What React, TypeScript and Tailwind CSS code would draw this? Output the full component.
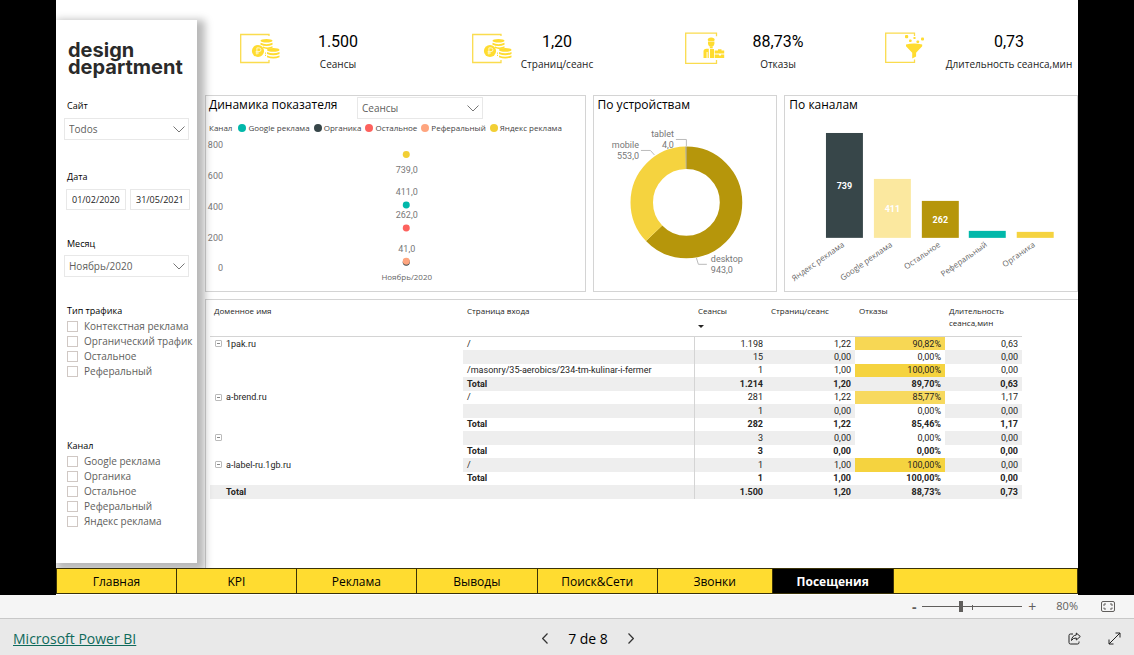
import { useState } from 'react';
import type { ReactNode } from 'react';

type Option = { label: string; width: string };

const trafficTypes = ['Контекстная реклама', 'Органический трафик', 'Остальное', 'Реферальный'];
const channels = ['Google реклама', 'Органика', 'Остальное', 'Реферальный', 'Яндекс реклама'];

const legend = [
  { label: 'Google реклама', dot: 'bg-[#01b8aa]' },
  { label: 'Органика', dot: 'bg-[#374649]' },
  { label: 'Остальное', dot: 'bg-[#fd625e]' },
  { label: 'Реферальный', dot: 'bg-[#fea57f]' },
  { label: 'Яндекс реклама', dot: 'bg-[#f2cf35]' },
];

const tabs: Option[] = [
  { label: 'Главная', width: 'flex-[120]' },
  { label: 'KPI', width: 'flex-[120]' },
  { label: 'Реклама', width: 'flex-[120]' },
  { label: 'Выводы', width: 'flex-[121]' },
  { label: 'Поиск&Сети', width: 'flex-[120]' },
  { label: 'Звонки', width: 'flex-[115]' },
  { label: 'Посещения', width: 'flex-[121]' },
  { label: '', width: 'flex-[185]' },
];

type Row = {
  domain?: string;
  toggle?: boolean;
  page: string;
  values: [string, string, string, string];
  heat?: string;
  total?: boolean;
};

const rows: Row[] = [
  { domain: '1pak.ru', toggle: true, page: '/', values: ['1.198', '1,22', '90,82%', '0,63'], heat: 'bg-[#f7d754]' },
  { page: '', values: ['15', '0,00', '0,00%', '0,00'], heat: 'bg-white' },
  { page: '/masonry/35-aerobics/234-tm-kulinar-i-fermer', values: ['1', '1,00', '100,00%', '0,00'], heat: 'bg-[#f5d33f]' },
  { page: 'Total', values: ['1.214', '1,20', '89,70%', '0,63'], total: true },
  { domain: 'a-brend.ru', toggle: true, page: '/', values: ['281', '1,22', '85,77%', '1,17'], heat: 'bg-[#f7d95f]' },
  { page: '', values: ['1', '0,00', '0,00%', '0,00'], heat: 'bg-white' },
  { page: 'Total', values: ['282', '1,22', '85,46%', '1,17'], total: true },
  { domain: '', toggle: true, page: '', values: ['3', '0,00', '0,00%', '0,00'], heat: 'bg-white' },
  { page: 'Total', values: ['3', '0,00', '0,00%', '0,00'], total: true },
  { domain: 'a-label-ru.1gb.ru', toggle: true, page: '/', values: ['1', '1,00', '100,00%', '0,00'], heat: 'bg-[#f5d33f]' },
  { page: 'Total', values: ['1', '1,00', '100,00%', '0,00'], total: true },
];

function CoinsIcon() {
  return (
    <svg viewBox="0 0 40 32" className="h-8 w-10 shrink-0" fill="none" aria-hidden="true">
      <path d="M29 4V2.500H.7V30.500H29V28" stroke="#fadc4e" strokeWidth="1.300" />
      <g fill="#ffdc30">
        <path d="M20.500 8.800a6 1.800 0 0 1 12 0a6 1.800 0 0 1-12 0ZM20.500 10.800q6 2.800 12 0v1.900q-6 2.800-12 0ZM23 14.500q5 1.900 9.500-.2v1.700q-2.500 1.300-6 1l-3.500-1Z" />
        <path d="M27 17.900a6 1.800 0 0 1 12.500 0a6 1.800 0 0 1-12.500 0ZM27 20q6 2.700 12.500 0v2q-6 2.700-12.500 0ZM27 23.400q6 2.600 12.500 0v1.900q-6 2.600-12.500 0Z" />
        <circle cx="18" cy="19" r="6.100" />
        <path d="M25 20.500h1v1.200h-1zM25 22.800h1V24h-1z" />
      </g>
      <path d="M16.900 22.500v-6.600h2.200a1.800 1.800 0 0 1 0 3.700h-3.400M15.700 21h3.200" stroke="#fff7cc" strokeWidth="1" />
    </svg>
  );
}

function WorkerIcon() {
  return (
    <svg viewBox="0 0 40 32" className="h-8 w-10 shrink-0" fill="none" aria-hidden="true">
      <path d="M31.500 4.300V1.200H.7V31.300H31.500V28" stroke="#fadc4e" strokeWidth="1.300" />
      <g fill="#ffdc30">
        <path d="M22.700 8q0-2.500 3.500-2.500T29.700 8l-.7 1h-5.600Z" />
        <path d="M23 9.500h6.400v2q-.4 3.200-3.200 3.200T23 11.500Z" />
        <path d="M24.800 14.500h2.900v1.800h-2.900z" />
        <path d="M18.500 26v-6.500q0-2.500 3-2.700h2.300V26h-1.200v-6h-1v6ZM25 17h4v9H25Z" />
        <path d="M29.700 18.500h3.300v-1.300h3.500v1.300h2.700v3H29.700ZM29.700 22.500h4.300v1h2v-1h3.200V26H29.700Z" />
      </g>
    </svg>
  );
}

function FunnelIcon() {
  return (
    <svg viewBox="0 0 40 32" className="h-8 w-10 shrink-0" fill="none" aria-hidden="true">
      <path d="M29.500 4V1.200H.7V30.300H29.500V27.500" stroke="#fadc4e" strokeWidth="1.300" />
      <g fill="#ffdc30">
        <path d="M21 12.500q8-2 16.200 0v1.700l-6.100 6.500v3.800l-3.900 2v-5.800l-6.200-6.500Z" />
        <rect x="20" y="3" width="3.200" height="3.200" rx="1" />
        <rect x="24" y="7.500" width="2.600" height="2.600" rx=".8" />
        <rect x="28.500" y="5" width="2" height="2" />
        <rect x="31.500" y="8.500" width="2.600" height="2.600" rx=".8" />
        <rect x="36" y="5.500" width="3" height="3" rx="1" />
      </g>
    </svg>
  );
}

function Kpi({ icon, value, label, box }: { icon: ReactNode; value: string; label: string; box: string }) {
  return (
    <div className="flex min-w-0 items-start">
      {icon}
      <div className={`flex flex-col items-center whitespace-nowrap ${box}`}>
        <span className="font-[Roboto] text-base leading-5 text-black">{value}</span>
        <span className="mt-1 text-[10px] leading-4 text-[#222]">{label}</span>
      </div>
    </div>
  );
}

function Dropdown({ id, label, value, size }: { id: string; label?: string; value: string; size: string }) {
  return (
    <div className={`relative ${size}`}>
      <select
        id={id}
        aria-label={label}
        className="block h-[22px] w-full appearance-none border border-[#e8e8e8] bg-white pl-1 text-[10px] text-[#605e5c]"
      >
        <option>{value}</option>
      </select>
      <svg viewBox="0 0 12 7" className="pointer-events-none absolute top-2 right-1 h-[7px] w-3" fill="none" stroke="#777" aria-hidden="true">
        <path d="M.5.500 6 6 11.500.500" />
      </svg>
    </div>
  );
}

function CheckList({ title, items }: { title: string; items: string[] }) {
  return (
    <fieldset>
      <legend className="text-[9px] leading-4 text-black">{title}</legend>
      {items.map((item) => (
        <label key={item} className="flex h-[15px] items-center gap-1.5 whitespace-nowrap text-[10px] leading-[15px] text-[#605e5c]">
          <input type="checkbox" className="size-[11px] shrink-0 appearance-none border border-[#d0c8c4] bg-white checked:bg-[#605e5c]" />
          {item}
        </label>
      ))}
    </fieldset>
  );
}

function Sidebar() {
  return (
    <aside className="relative mt-5 mb-[5px] flex flex-col bg-white pr-1 pb-[33px] pl-[11px] shadow-[4px_4px_8px_4px_rgba(0,0,0,0.28)]">
      <div className="mt-[22px] pl-px font-[Inter] text-[20px] leading-[17px] font-bold text-[#2a2a2a]">
        design
        <br />
        department
      </div>
      <label htmlFor="site" className="mt-[22px] text-[9px] leading-4 text-black">Сайт</label>
      <Dropdown id="site" value="Todos" size="mt-1 -ml-[3px] w-[125px]" />
      <fieldset className="mt-[29px]">
        <legend className="text-[9px] leading-4 text-black">Дата</legend>
        <div className="mt-1 -ml-px flex gap-1">
          <input aria-label="Начало" defaultValue="01/02/2020" className="h-[21px] w-[60px] border border-[#e8e8e8] pl-[5px] text-[9px] text-[#222]" />
          <input aria-label="Конец" defaultValue="31/05/2021" className="h-[21px] w-[60px] border border-[#e8e8e8] pl-[5px] text-[9px] text-[#222]" />
        </div>
      </fieldset>
      <label htmlFor="month" className="mt-[26px] text-[9px] leading-4 text-black">Месяц</label>
      <Dropdown id="month" value="Ноябрь/2020" size="mt-[3px] -ml-[3px] w-[125px]" />
      <div className="mt-[26px]">
        <CheckList title="Тип трафика" items={trafficTypes} />
      </div>
      <div className="mt-[59px]">
        <CheckList title="Канал" items={channels} />
      </div>
    </aside>
  );
}

function ScatterPanel() {
  const ticks = [
    { label: '800', y: 9 },
    { label: '600', y: 40 },
    { label: '400', y: 71 },
    { label: '200', y: 102 },
    { label: '0', y: 132 },
  ];
  const points = [
    { y: 18.5, text: '739,0', ty: 34, color: '#f2cf35' },
    { y: 69, text: '411,0', ty: 56, color: '#01b8aa' },
    { y: 92, text: '262,0', ty: 79, color: '#fd625e' },
    { y: 125.5, text: '41,0', ty: 113, color: '#fea57f' },
  ];
  return (
    <section className="min-w-0 border border-[#d4d4d4]">
      <div className="flex h-6 items-start pl-[3px]">
        <h2 className="w-[148px] text-[12px] leading-[18px] whitespace-nowrap text-black">Динамика показателя</h2>
        <Dropdown id="metric" label="Показатель" value="Сеансы" size="mt-px w-[126px]" />
      </div>
      <div className="flex h-4 items-center gap-1 pl-[3px] text-[8px] whitespace-nowrap text-[#444]">
        <span className="mr-0.5">Канал</span>
        {legend.map((item) => (
          <span key={item.label} className="flex items-center">
            <span className={`mr-0.5 size-2 rounded-full ${item.dot}`} />
            {item.label}
          </span>
        ))}
      </div>
      <svg viewBox="0 0 379 155" className="w-full" fontFamily="Roboto" fontSize="9" fill="#777" aria-label="Динамика показателя">
        {ticks.map((t) => (
          <text key={t.label} x="17" y={t.y + 3} textAnchor="end">{t.label}</text>
        ))}
        <circle cx="200.500" cy="126.500" r="3.500" fill="#374649" />
        {points.map((p) => (
          <g key={p.text}>
            <circle cx="200.500" cy={p.y} r="3.500" fill={p.color} />
            <text x="201" y={p.ty + 3} textAnchor="middle">{p.text}</text>
          </g>
        ))}
        <text x="201" y="144" textAnchor="middle" fontFamily="Open Sans" fontSize="8" fill="#666">Ноябрь/2020</text>
      </svg>
    </section>
  );
}

function DonutPanel() {
  return (
    <section className="min-w-0 border border-[#d4d4d4]">
      <h2 className="h-6 pl-1 text-[12px] leading-[18px] whitespace-nowrap text-black">По устройствам</h2>
      <svg viewBox="0 0 183 170" className="w-full" fontFamily="Roboto" fontSize="9" fill="#777" aria-label="По устройствам">
        <g fill="none" strokeWidth="22.500" transform="rotate(-90 92.500 82.500)">
          <circle cx="92.500" cy="82.500" r="44.700" stroke="#b6960b" pathLength="1500" strokeDasharray="943 557" />
          <circle cx="92.500" cy="82.500" r="44.700" stroke="#f5d33f" pathLength="1500" strokeDasharray="553 947" strokeDashoffset="-943" />
          <circle cx="92.500" cy="82.500" r="44.700" stroke="#8a8468" pathLength="1500" strokeDasharray="4 1496" strokeDashoffset="-1496" />
        </g>
        <g fill="none" stroke="#bbb">
          <path d="M82 19.500H92.500V26" />
          <path d="M47 30.500H56.500L60.500 35" />
          <path d="M102.500 138L104.500 144.500H113" />
        </g>
        <g textAnchor="end">
          <text x="80" y="17">tablet</text>
          <text x="80" y="28">4,0</text>
          <text x="45" y="28">mobile</text>
          <text x="45" y="39">553,0</text>
        </g>
        <text x="117" y="142">desktop</text>
        <text x="117" y="153">943,0</text>
      </svg>
    </section>
  );
}

function BarsPanel() {
  const bars = [
    { label: 'Яндекс реклама', x: 41, h: 105, color: '#374649', value: '739' },
    { label: 'Google реклама', x: 89, h: 59, color: '#fbe89f', value: '411' },
    { label: 'Остальное', x: 137, h: 37, color: '#b6960b', value: '262' },
    { label: 'Реферальный', x: 184, h: 7, color: '#01b8aa' },
    { label: 'Органика', x: 232, h: 6, color: '#f5d33f' },
  ];
  return (
    <section className="min-w-0 border border-[#d4d4d4]">
      <h2 className="h-6 pl-1 text-[12px] leading-[18px] whitespace-nowrap text-black">По каналам</h2>
      <svg viewBox="0 0 292 170" className="w-full" fontSize="9" aria-label="По каналам">
        {bars.map((b) => (
          <g key={b.label}>
            <rect x={b.x} y={118 - b.h} width="37" height={b.h} fill={b.color} />
            {b.value && (
              <text x={b.x + 18.5} y={122 - b.h / 2} textAnchor="middle" fontFamily="Roboto" fontWeight="700" fill="#fff">
                {b.value}
              </text>
            )}
            <text transform={`translate(${b.x + 19} 126) rotate(-35)`} textAnchor="end" fontFamily="Open Sans" fontSize="8" fill="#666">
              {b.label}
            </text>
          </g>
        ))}
      </svg>
    </section>
  );
}

function Toggle() {
  return (
    <button type="button" aria-label="Свернуть" className="mr-1 flex size-[7px] items-center justify-center rounded-[1px] border border-[#bbb]">
      <span className="h-px w-[3px] bg-[#888]" />
    </button>
  );
}

function VisitsTable() {
  return (
    <section className="flex-1 border-t border-l border-[#d4d4d4] pt-[5px] pr-14 pl-1">
      <table className="w-full table-fixed border-collapse font-[Roboto] text-[9px] leading-3 text-[#252423]">
        <colgroup>
          <col />
          <col className="w-[231px]" />
          <col className="w-[73px]" />
          <col className="w-[88px]" />
          <col className="w-[90px]" />
          <col className="w-[77px]" />
        </colgroup>
        <thead className="font-['Open_Sans','Noto_Sans',sans-serif] text-[8px] leading-3">
          <tr className="h-8 border-b border-[#d4d4d4] text-left align-top *:p-0 *:pl-1 *:font-normal">
            <th>Доменное имя</th>
            <th>Страница входа</th>
            <th>
              Сеансы
              <svg viewBox="0 0 6 3" className="mt-2 h-[3px] w-1.5" fill="#252423" aria-hidden="true">
                <path d="M0 0H6L3 3Z" />
              </svg>
            </th>
            <th className="whitespace-nowrap">Страниц/сеанс</th>
            <th>Отказы</th>
            <th>Длительность сеанса,мин</th>
          </tr>
        </thead>
        <tbody>
          {rows.map((row, i) => {
            const band = i % 2 ? 'bg-[#eeeeee]' : '';
            return (
              <tr key={i} className={`odd:h-[13px] even:h-[14px] *:p-0 ${row.total ? 'font-bold' : ''}`}>
                <td>
                  {row.toggle && (
                    <span className="flex items-center pl-[5px]">
                      <Toggle />
                      {row.domain}
                    </span>
                  )}
                </td>
                <td className={band}>
                  <span className="pl-1 whitespace-nowrap">{row.page}</span>
                </td>
                {row.values.map((v, c) => (
                  <td key={c} className={`text-right ${c === 2 && row.heat ? row.heat : band} ${c === 0 ? 'border-l border-[#d4d4d4]' : ''}`}>
                    <span className="pr-1">{v}</span>
                  </td>
                ))}
              </tr>
            );
          })}
          <tr className="h-[14px] bg-[#eeeeee] font-bold *:p-0">
            <td><span className="pl-4">Total</span></td>
            <td />
            <td className="border-l border-[#d4d4d4] text-right"><span className="pr-1">1.500</span></td>
            <td className="text-right"><span className="pr-1">1,20</span></td>
            <td className="text-right"><span className="pr-1">88,73%</span></td>
            <td className="text-right"><span className="pr-1">0,73</span></td>
          </tr>
        </tbody>
      </table>
    </section>
  );
}

function Tabs() {
  const [active, setActive] = useState('Посещения');
  return (
    <nav className="relative flex h-[27px] pb-px">
      {tabs.map((tab) => (
        <button
          key={tab.width + tab.label}
          type="button"
          aria-label={tab.label || 'Пустая вкладка'}
          onClick={() => setActive(tab.label)}
          className={`${tab.width} min-w-0 border border-l-0 border-[#3a3208] pt-px text-[12px] first:border-l ${
            active === tab.label ? 'bg-black font-bold text-white' : 'bg-[#ffdc30] text-black'
          }`}
        >
          {tab.label}
        </button>
      ))}
    </nav>
  );
}

function ZoomBar() {
  return (
    <div className="flex h-[23px] items-center justify-end bg-[#f5f5f5] pr-[19px] text-[#605e5c]">
      <button type="button" aria-label="Уменьшить" className="w-2 text-sm leading-4 font-bold">-</button>
      <div className="relative ml-1 flex h-4 w-[100px] items-center">
        <input
          type="range"
          aria-label="Масштаб"
          min={10}
          max={190}
          defaultValue={78}
          className="h-px w-full appearance-none bg-[#605e5c] [&::-webkit-slider-thumb]:h-[11px] [&::-webkit-slider-thumb]:w-1 [&::-webkit-slider-thumb]:appearance-none [&::-webkit-slider-thumb]:bg-[#605e5c]"
        />
        <span className="absolute top-1.5 left-[50px] h-[5px] w-px bg-[#605e5c]" />
      </div>
      <button type="button" aria-label="Увеличить" className="ml-1.5 w-2 text-sm leading-4">+</button>
      <span className="ml-5 text-[11px]">80%</span>
      <button type="button" aria-label="По размеру страницы" className="ml-[23px]">
        <svg viewBox="0 0 14 11" className="h-[11px] w-3.5" fill="none" stroke="#605e5c" aria-hidden="true">
          <rect x=".5" y=".5" width="13" height="10" rx="1.500" />
          <path d="M5 3H3V5M9 3H11V5M5 8H3V6.500M9 8H11V6.500" />
        </svg>
      </button>
    </div>
  );
}

function Footer() {
  return (
    <footer className="grid h-[37px] grid-cols-[1fr_auto_1fr] items-center border-t border-[#c8c8c8] bg-[#e9e9e9] pt-0.5 pr-[13px] pl-[13px]">
      <a href="#powerbi" className="justify-self-start text-[14px] text-[#0f6a5b] underline">Microsoft Power BI</a>
      <div className="ml-[42px] flex items-center gap-5 text-[14px] text-black">
        <button type="button" aria-label="Назад">
          <svg viewBox="0 0 6 11" className="h-[11px] w-1.5" fill="none" stroke="#333" strokeWidth="1.200" aria-hidden="true">
            <path d="M5.500.500.700 5.500 5.500 10.500" />
          </svg>
        </button>
        <span>7 de 8</span>
        <button type="button" aria-label="Вперёд">
          <svg viewBox="0 0 6 11" className="h-[11px] w-1.5" fill="none" stroke="#333" strokeWidth="1.200" aria-hidden="true">
            <path d="M.5.500 5.300 5.500.500 10.500" />
          </svg>
        </button>
      </div>
      <div className="flex items-center gap-[27px] justify-self-end">
        <button type="button" aria-label="Поделиться">
          <svg viewBox="0 0 13 13" className="size-[13px]" fill="none" stroke="#222" strokeLinejoin="round" aria-hidden="true">
            <path d="M5 2H2.500Q1 2 1 3.500V10.500Q1 12 2.500 12H9.500Q11 12 11 10.500V9.500" />
            <path d="M8.300 1 12.300 4.500 8.300 8V6Q5 5.800 3.500 8.500 4 3.500 8.300 3Z" />
          </svg>
        </button>
        <button type="button" aria-label="На весь экран">
          <svg viewBox="0 0 13 13" className="size-[13px]" fill="none" stroke="#222" aria-hidden="true">
            <path d="M1 12 12 1M7.500 1H12V5.500M1 7.500V12H5.500" />
          </svg>
        </button>
      </div>
    </footer>
  );
}

export default function App() {
  return (
    <div className="flex min-h-screen flex-col bg-[#e9e9e9] font-['Open_Sans','Noto_Sans',sans-serif]">
      <div className="flex flex-1 flex-col bg-black px-14">
        <main className="flex flex-1 flex-col overflow-hidden bg-white">
          <div className="grid flex-1 grid-cols-[141px_minmax(0,1fr)] gap-2">
            <Sidebar />
            <div className="flex flex-col">
              <div className="grid h-[95px] grid-cols-[232fr_213fr_200fr_193fr] pt-8 pl-[35px]">
                <Kpi icon={<CoinsIcon />} value="1.500" label="Сеансы" box="w-[116px]" />
                <Kpi icon={<CoinsIcon />} value="1,20" label="Страниц/сеанс" box="w-[90px]" />
                <Kpi icon={<WorkerIcon />} value="88,73%" label="Отказы" box="w-[106px]" />
                <Kpi icon={<FunnelIcon />} value="0,73" label="Длительность сеанса,мин" box="ml-4 w-[136px]" />
              </div>
              <div className="mb-[7px] grid grid-cols-[381fr_185fr_294fr] gap-[7px]">
                <ScatterPanel />
                <DonutPanel />
                <BarsPanel />
              </div>
              <VisitsTable />
            </div>
          </div>
          <Tabs />
        </main>
      </div>
      <ZoomBar />
      <Footer />
    </div>
  );
}
